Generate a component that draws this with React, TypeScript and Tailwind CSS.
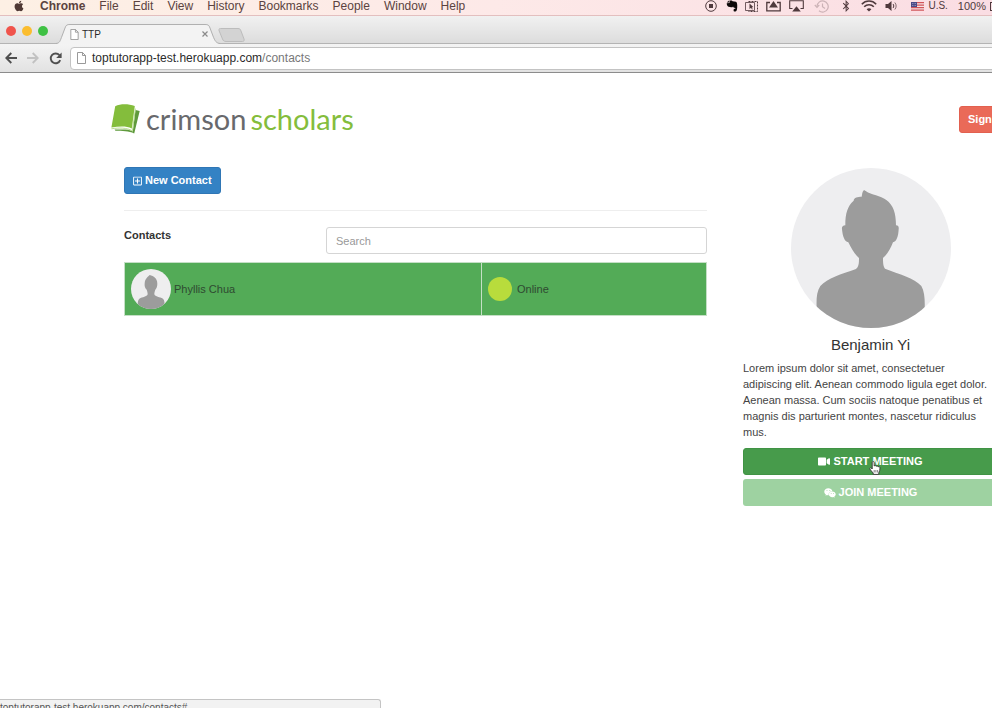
import React from "react";
import { FaApple, FaVideo, FaWeixin, FaRegPlusSquare, FaBluetoothB } from "react-icons/fa";

const MENUS = ["File", "Edit", "View", "History", "Bookmarks", "People", "Window", "Help"];

function PageIcon({ className }: { className: string }) {
  return (
    <svg className={className} viewBox="0 0 9 12" fill="#fff" stroke="#8f8f8f" strokeWidth="0.9" aria-hidden="true">
      <path d="M0.5 0.5H5.5L8.5 3.5V11.5H0.5Z" />
      <path d="M5.5 0.5V3.5H8.5" fill="none" />
    </svg>
  );
}

function StatusIcons() {
  return (
    <div className="flex shrink-0 items-center text-[#4f3a3d]">
      <svg className="mr-[9px] h-3 w-3" viewBox="0 0 12 12" fill="none" stroke="currentColor" aria-hidden="true">
        <circle cx="6" cy="6" r="5.3" />
        <rect x="4" y="4" width="4" height="4" fill="currentColor" stroke="none" />
      </svg>
      <svg className="mr-[7px] h-3 w-3" viewBox="0 0 12 12" fill="#0d0909" aria-hidden="true">
        <path d="M3.5 0.5H5.8L6.6 1.3L10 1.8C11.2 2.4 11.4 5 11.2 7.5C11 10 10.5 11.6 9.2 11.6C7.8 11.6 7.5 11 7.6 9.9C7.7 9 8.4 8.7 9.3 8.8V8C7.5 8 7.4 7.2 7 6.5C6.6 7.5 5.6 7.5 4 7C1.6 6.7 0.8 5.5 0.7 3.2L3.5 3Z" />
        <path d="M0.8 2.5L2.9 0.5V2.5Z" />
      </svg>
      <svg className="mr-2 h-[13px] w-[13px]" viewBox="0 0 13 13" fill="none" stroke="currentColor" aria-hidden="true">
        <path d="M3.5 1.5H12.5V11.5H3.5" strokeDasharray="2 1" />
        <path d="M0.5 2.5H9.5V10.5H0.5Z" strokeWidth="0.8" />
        <path d="M4.5 3.5V9L6 7.8L7 9.6L7.7 9.2L6.9 7.4L8.3 7Z" fill="currentColor" stroke="none" />
      </svg>
      <svg className="mr-2 h-3 w-[15px]" viewBox="0 0 15 12" fill="none" stroke="currentColor" strokeWidth="1.3" aria-hidden="true">
        <path d="M4 2.5H0.8V10.8H14.2V2.5H11" />
        <path d="M7.5 1L12 7.5H3Z" fill="currentColor" stroke="none" />
      </svg>
      <svg className="mr-[10px] h-3 w-[15px]" viewBox="0 0 15 12" fill="none" stroke="currentColor" strokeWidth="1.1" aria-hidden="true">
        <path d="M3.5 8.5H0.7V0.7H14.3V8.5H11.5" />
        <path d="M7.5 6.2L11.8 11.6H3.2Z" fill="currentColor" stroke="none" />
      </svg>
      <svg className="mr-3 h-[13px] w-[15px]" viewBox="0 0 15 13" fill="none" stroke="#cbb2b6" strokeWidth="1.2" aria-hidden="true">
        <path d="M3 6.5A5.6 5.6 0 1 1 5 10.8" />
        <path d="M0.8 5L3 7.3L5.2 5" />
        <path d="M8.5 3.4V6.8L11 8.6" />
      </svg>
      <FaBluetoothB className="mr-[10px] h-3 w-[10px]" aria-hidden="true" />
      <svg className="mr-2 h-3 w-4" viewBox="0 0 16 12" fill="none" stroke="currentColor" strokeWidth="1.6" aria-hidden="true">
        <path d="M0.8 4.2C4.8 0 11.2 0 15.2 4.2" />
        <path d="M3.2 6.8C5.8 4.1 10.2 4.1 12.8 6.8" />
        <path d="M5.6 9.2C7 7.9 9 7.9 10.4 9.2L8 11.6Z" fill="currentColor" stroke="none" />
      </svg>
      <svg className="mr-[14px] h-[10px] w-3" viewBox="0 0 12 10" fill="none" stroke="currentColor" aria-hidden="true">
        <path d="M0.5 3H3L6.5 0V10L3 7H0.5Z" fill="currentColor" stroke="none" />
        <path d="M8 3C9 4 9 6 8 7" />
        <path d="M9.8 1.5C11.6 3.5 11.6 6.5 9.8 8.5" strokeWidth="0.7" />
      </svg>
      <svg className="mr-1 h-[9px] w-[13px]" viewBox="0 0 13 9" aria-hidden="true">
        <rect width="13" height="9" fill="#f5e3e4" />
        <path d="M0 0.7H13M0 3.2H13M0 5.7H13M0 8.2H13" stroke="#d2555a" strokeWidth="1.2" />
        <rect width="6" height="5" fill="#4a4a86" />
        <path d="M1 1.5H5M1 3.5H5" stroke="#b9b9d8" strokeWidth="0.7" strokeDasharray="0.8 0.8" />
      </svg>
      <span className="mr-[10px] text-[10px]">U.S.</span>
      <span className="mr-1 text-[11px]">100%</span>
      <svg className="h-[9px] w-5" viewBox="0 0 20 9" fill="none" stroke="currentColor" aria-hidden="true">
        <rect x="0.5" y="0.5" width="17" height="8" />
        <rect x="2" y="2" width="14" height="5" fill="currentColor" stroke="none" />
      </svg>
    </div>
  );
}

function MenuBar() {
  return (
    <div className="flex h-4 items-center overflow-hidden border-b border-[#e3bfbf] bg-linear-to-r from-[#fdf0e4] via-[#fde9e8] to-[#fadde3] pb-[3px] pl-[13px] text-xs text-[#5b4340]">
      <FaApple className="mr-[15px] h-3 w-3 shrink-0 text-[#4f3935]" aria-hidden="true" />
      <nav className="flex gap-[14px] leading-3">
        <span className="font-bold">Chrome</span>
        {MENUS.map((m) => (
          <span key={m}>{m}</span>
        ))}
      </nav>
      <div className="-mr-[18px] ml-auto shrink-0">
        <StatusIcons />
      </div>
    </div>
  );
}

function TabStrip() {
  return (
    <div className="flex h-7 items-end bg-linear-to-b from-[#f1f1f1] to-[#dcdcdc] shadow-[inset_0_-1px_0_#b4b4b4]">
      <div className="flex gap-1.5 self-start pt-2.5 pl-[6px]">
        <span className="h-[10px] w-[10px] rounded-full bg-[#f0544c]" />
        <span className="h-[10px] w-[10px] rounded-full bg-[#fbbd2f]" />
        <span className="h-[10px] w-[10px] rounded-full bg-[#3fc144]" />
      </div>
      <div className="relative ml-2 flex h-5 w-[164px] items-center pr-3 pl-[14px]">
        <svg className="absolute inset-0 h-full w-full" viewBox="0 0 164 20" preserveAspectRatio="none" aria-hidden="true">
          <path d="M0 20C4 19 4 17 6 12L9 4C10 1 11 0.5 14 0.5H149C152 0.5 153 1 154 4L157 12C159 17 160 19 164 20Z" fill="#f3f3f3" />
          <path d="M0 19.5C4 19 4 17 6 12L9 4C10 1 11 0.5 14 0.5H149C152 0.5 153 1 154 4L157 12C159 17 160 19 164 19.5" fill="none" stroke="#b0b0b0" />
        </svg>
        <PageIcon className="relative h-[11px] w-[9px]" />
        <span className="relative ml-[3px] text-[10px] text-[#2a2a2a]">TTP</span>
        <button type="button" aria-label="Close tab" className="relative ml-auto">
          <svg className="h-1.5 w-1.5" viewBox="0 0 6 6" stroke="#8a8a8a" strokeWidth="1.2" aria-hidden="true">
            <path d="M0.5 0.5L5.5 5.5M5.5 0.5L0.5 5.5" />
          </svg>
        </button>
      </div>
      <button type="button" aria-label="New tab" className="-ml-0.5 self-start pt-3">
        <svg className="h-[14px] w-[27px]" viewBox="0 0 27 14" fill="#d3d3d3" stroke="#bcbcbc" aria-hidden="true">
          <path d="M2.5 0.5H20C22 0.5 22.5 1.5 23 3L26 11C26.5 12.5 26 13.5 24.5 13.5H8C6 13.5 5 12.5 4.5 11L1.2 3C0.5 1.5 1 0.5 2.5 0.5Z" />
        </svg>
      </button>
    </div>
  );
}

function Toolbar() {
  return (
    <div className="flex h-[29px] items-center overflow-hidden border-b border-[#8c8c8c] bg-linear-to-b from-[#f4f4f4] to-[#e2e2e2] pl-[5px]">
      <button type="button" aria-label="Back">
        <svg className="h-3 w-3" viewBox="0 0 12 12" fill="none" stroke="#4f4f4f" strokeWidth="1.9" aria-hidden="true">
          <path d="M12 6H1.5M6.3 1L1.3 6L6.3 11" />
        </svg>
      </button>
      <button type="button" aria-label="Forward" className="ml-[10px]">
        <svg className="h-3 w-3" viewBox="0 0 12 12" fill="none" stroke="#c2c2c2" strokeWidth="1.9" aria-hidden="true">
          <path d="M0 6H10.5M5.7 1L10.7 6L5.7 11" />
        </svg>
      </button>
      <button type="button" aria-label="Reload" className="ml-[10px]">
        <svg className="h-[13px] w-[13px]" viewBox="0 0 13 13" fill="none" stroke="#4f4f4f" strokeWidth="1.9" aria-hidden="true">
          <path d="M10.4 3.2A4.9 4.9 0 1 0 11.2 8.2" />
          <path d="M12.6 0.6V6H7.2Z" fill="#4f4f4f" stroke="none" />
        </svg>
      </button>
      <div className="-mr-2 ml-2 flex h-[23px] flex-1 items-center rounded-sm border border-[#c3c3c3] bg-white pl-1.5">
        <PageIcon className="h-3 w-[9px]" />
        <a href="#contacts" className="ml-1.5 text-xs text-[#2b2b2b]">
          toptutorapp-test.herokuapp.com<span className="text-[#777]">/contacts</span>
        </a>
      </div>
    </div>
  );
}

function Logo() {
  return (
    <a href="#home" className="flex items-center gap-1.5">
      <svg className="h-[30px] w-[29px]" viewBox="0 0 29 30" aria-hidden="true">
        <path d="M24.5 6L28.7 7L23.2 29.6C18 26.6 11 27.4 4.5 26.8L3.5 25.6C10 25.6 17 24.6 21.8 27.4Z" fill="#5f9a3c" />
        <path d="M4.2 2.2C10 -0.6 17.5 -0.2 23.8 2L20.8 24.4C15 21.6 8 22.4 0.4 23.4Z" fill="#84bd3c" />
        <path d="M0.4 24.8C8 23.6 16 23.6 21.4 26.8L24.4 4.6" fill="none" stroke="#a9d477" strokeWidth="0.8" />
      </svg>
      <span className="flex gap-1 font-[Lato,sans-serif] text-[29px] leading-9 text-[#68696c]">
        <span>crimson</span>
        <span className="text-[#84bd3c]">scholars</span>
      </span>
    </a>
  );
}

function ContactAvatar() {
  return (
    <svg className="h-10 w-10 shrink-0" viewBox="0 0 120 120" role="img" aria-label="Phyllis Chua">
      <clipPath id="contact-clip">
        <circle cx="60" cy="60" r="60" />
      </clipPath>
      <circle cx="60" cy="60" r="60" fill="#eeeeef" />
      <path
        clipPath="url(#contact-clip)"
        fill="#9c9c9c"
        d="M56 18C68 21 79 28 79 44C79 51 77 58 73 62C71 68 70 71 70 76C73 84 86 84 96 89C101 94 101 102 101 120H20C20 102 20 94 25 89C35 84 47 84 50 76C50 71 49 68 47 62C42 58 40 51 41 43C42 29 50 24 56 18Z"
      />
    </svg>
  );
}

function ProfileAvatar() {
  return (
    <svg className="mx-auto h-40 w-40" viewBox="0 0 480 480" role="img" aria-label="Benjamin Yi">
      <clipPath id="profile-clip">
        <circle cx="240" cy="240" r="240" />
      </clipPath>
      <circle cx="240" cy="240" r="240" fill="#eeeef0" />
      <path
        clipPath="url(#profile-clip)"
        fill="#9c9c9c"
        d="M219 66C213 72 214 78 212 86C200 86 189 88 188 98C170 114 163 135 163 172C155 173 152 176 153 184C155 205 160 221 172 223C182 243 190 258 204 270C204 288 203 296 195 303C150 319 110 330 88 354C76 372 76 395 77 424V480H401V424C402 395 401 372 391 354C370 330 325 319 282 302C277 294 276 288 276 270C290 258 298 243 306 223C317 221 322 205 323 184C324 176 322 173 315 172C315 135 307 112 286 96C268 82 242 82 224 69Z"
      />
    </svg>
  );
}

function HandCursor() {
  return (
    <svg className="pointer-events-none absolute top-[13px] left-1/2 -ml-0.5 h-[14px] w-3" viewBox="0 0 12 14" fill="#fff" stroke="#333" strokeWidth="0.9" aria-hidden="true">
      <path d="M3.2 8V1.6C3.2 0.2 5.2 0.2 5.2 1.6V5C5.8 4.3 7 4.5 7.2 5.3C7.8 4.7 8.9 5 9.1 5.8C10 5.4 11 5.9 11 7C11 9 10.6 10.4 9.8 11.6V13.4H4.2V12C3 10.6 1.8 9.6 0.8 8C0.4 6.9 1.6 6.4 2.4 7.2Z" />
      <path d="M5.2 9V11.5M6.9 9V11.5M8.6 9V11.5" strokeWidth="0.6" />
    </svg>
  );
}

function Contacts() {
  return (
    <section className="min-w-0 flex-1">
      <button type="button" className="flex h-[27px] items-center gap-[3px] rounded-[3px] border border-[#2f76b5] bg-[#3482c4] px-2 text-[11px] font-bold text-white">
        <FaRegPlusSquare className="h-[10px] w-[9px]" aria-hidden="true" />
        New Contact
      </button>
      <hr className="mt-4 border-[#eeeeee]" />
      <div className="mt-4 flex">
        <label htmlFor="contact-search" className="w-[202px] shrink-0 text-[11px] leading-4 font-bold text-[#333]">
          Contacts
        </label>
        <input
          id="contact-search"
          type="text"
          placeholder="Search"
          className="h-[27px] min-w-0 flex-1 rounded-[3px] border border-[#d5d5d5] px-[9px] text-[11px] placeholder:text-[#999]"
        />
      </div>
      <table className="mt-2 w-full border-collapse bg-[#53ab57] text-[11px] text-[#2f4a31]">
        <tbody>
          <tr>
            <td className="h-[53px] border border-[#c5dfc6] px-1.5">
              <div className="flex items-center gap-[3px]">
                <ContactAvatar />
                Phyllis Chua
              </div>
            </td>
            <td className="w-[225px] border border-[#c5dfc6] px-1.5">
              <div className="flex items-center gap-[5px]">
                <span className="h-6 w-6 rounded-full bg-[#b8dc3c]" />
                Online
              </div>
            </td>
          </tr>
        </tbody>
      </table>
    </section>
  );
}

function Profile() {
  return (
    <aside className="w-[255px] shrink-0 pt-px">
      <ProfileAvatar />
      <h1 className="mt-[9px] text-center text-[15px] leading-4 text-[#333]">Benjamin Yi</h1>
      <p className="mt-[7px] pr-2 text-[11px] leading-4 text-[#444]">
        Lorem ipsum dolor sit amet, consectetuer adipiscing elit. Aenean commodo ligula eget dolor. Aenean massa. Cum
        sociis natoque penatibus et magnis dis parturient montes, nascetur ridiculus mus.
      </p>
      <div className="mt-2 flex flex-col gap-1 text-[11px] font-bold text-white">
        <div className="relative">
          <button type="button" className="flex h-[27px] w-full items-center justify-center gap-[3px] rounded-[3px] border border-[#409344] bg-[#479b4b]">
            <FaVideo className="h-[11px] w-3" aria-hidden="true" />
            START MEETING
          </button>
          <HandCursor />
        </div>
        <button type="button" className="flex h-[27px] w-full items-center justify-center gap-[3px] rounded-[3px] bg-[#9ed2a1]">
          <FaWeixin className="h-3 w-3" aria-hidden="true" />
          JOIN MEETING
        </button>
      </div>
    </aside>
  );
}

export default function App() {
  return (
    <div className="flex min-h-screen flex-col overflow-hidden bg-white font-['Liberation_Sans',Arial,sans-serif]">
      <MenuBar />
      <TabStrip />
      <Toolbar />
      <header className="-mr-9 flex items-center justify-between pt-7 pl-[111px]">
        <Logo />
        <button type="button" className="h-[27px] w-[69px] shrink-0 rounded-[3px] border border-[#e2604f] bg-[#ea6a58] pl-2 text-left text-[11px] font-bold whitespace-nowrap text-white">
          Sign Out
        </button>
      </header>
      <main className="-mr-1.5 flex gap-9 pt-[30px] pl-[124px]">
        <Contacts />
        <Profile />
      </main>
      <footer className="mt-auto h-[9px] w-[381px] overflow-hidden rounded-tr-[3px] border-t border-r border-[#c4c4c4] bg-[#f2f2f2] text-[10px] leading-4 text-[#555]">
        toptutorapp-test.herokuapp.com/contacts#
      </footer>
    </div>
  );
}
